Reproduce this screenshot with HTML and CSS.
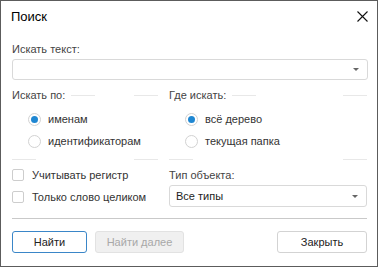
FILE: index.html
```html
<!DOCTYPE html>
<html lang="ru">
<head>
    <meta charset="UTF-8">
    <title>Поиск</title>
    <link rel="stylesheet" href="styles.css">
</head>
<body>
    <div class="dialog">
        <div class="dialog-header">
            <span class="dialog-title">Поиск</span>
            <svg class="close-icon" width="11" height="11" viewBox="0 0 11 11">
                <path d="M0.5 0.5 L10.5 10.5 M10.5 0.5 L0.5 10.5" stroke="#111" stroke-width="1.1" fill="none"/>
            </svg>
        </div>

        <div class="dialog-body">
            <div class="field-label">Искать текст:</div>
            <div class="combo combo-wide">
                <span class="combo-text"></span>
                <span class="combo-arrow"></span>
            </div>

            <div class="columns groups">
                <div class="group">
                    <div class="group-head">
                        <span class="group-title">Искать по:</span>
                        <span class="group-line"></span>
                    </div>
                    <div class="radio-list">
                        <div class="radio-row"><span class="radio checked"></span>именам</div>
                        <div class="radio-row"><span class="radio"></span>идентификаторам</div>
                    </div>
                    <div class="group-line group-bottom"></div>
                </div>
                <div class="group">
                    <div class="group-head">
                        <span class="group-title">Где искать:</span>
                        <span class="group-line"></span>
                    </div>
                    <div class="radio-list">
                        <div class="radio-row"><span class="radio checked"></span>всё дерево</div>
                        <div class="radio-row"><span class="radio"></span>текущая папка</div>
                    </div>
                    <div class="group-line group-bottom"></div>
                </div>
            </div>

            <div class="columns options">
                <div class="checks">
                    <div class="check-row"><span class="checkbox"></span>Учитывать регистр</div>
                    <div class="check-row"><span class="checkbox"></span>Только слово целиком</div>
                </div>
                <div class="type-field">
                    <div class="type-label">Тип объекта:</div>
                    <div class="combo">
                        <span class="combo-text">Все типы</span>
                        <span class="combo-arrow"></span>
                    </div>
                </div>
            </div>

            <div class="separator"></div>

            <div class="buttons">
                <button class="btn btn-primary">Найти</button>
                <button class="btn btn-disabled" disabled>Найти далее</button>
                <button class="btn btn-close">Закрыть</button>
            </div>
        </div>
    </div>
</body>
</html>
```

FILE: styles.css
```css
body {
    margin: 0;
    padding: 0;
    background-color: #fff;
    font-family: 'Liberation Sans', Arial, sans-serif;
    font-size: 11px;
    color: #333;
}

.dialog {
    width: 378px;
    height: 267px;
    box-sizing: border-box;
    border: 1px solid #5c5c5c;
    background-color: #fff;
}

.dialog-header {
    display: flex;
    align-items: center;
    justify-content: space-between;
    height: 31px;
    padding: 0 9px 0 10px;
}

.dialog-title {
    font-size: 13px;
    color: #000;
}

.close-icon {
    display: block;
}

.dialog-body {
    padding: 0 10px 0 11px;
}

.field-label {
    margin-top: 9px;
    line-height: 16px;
    color: #444;
}

.combo {
    display: flex;
    align-items: center;
    justify-content: space-between;
    box-sizing: border-box;
    height: 22px;
    padding: 0 8px 0 6px;
    border: 1px solid #d9d9d9;
    border-radius: 3px;
    background-color: #fff;
}

.combo-wide {
    margin-top: 2px;
    height: 21px;
    margin-right: -1px;
}

.combo-text {
    color: #222;
}

.combo-arrow {
    width: 0;
    height: 0;
    border-left: 3px solid transparent;
    border-right: 3px solid transparent;
    border-top: 3px solid #666;
}

.columns {
    display: grid;
    grid-template-columns: 146px 198px;
    column-gap: 11px;
}

.groups {
    margin-top: 8px;
}

.group-head {
    display: flex;
    align-items: center;
    height: 14px;
}

.group-title {
    color: #444;
    margin-right: 6px;
}

.group-line {
    flex: 1;
    height: 1px;
    background: linear-gradient(to right, #e8e8e8 0 24px, transparent 24px calc(100% - 24px), #e8e8e8 calc(100% - 24px));
}

.group-bottom {
    margin-top: 7px;
}

.radio-list {
    margin-top: 6px;
    padding-left: 16px;
}

.radio-row,
.check-row {
    display: flex;
    align-items: center;
    height: 22px;
    color: #333;
    white-space: nowrap;
}

.radio {
    position: relative;
    flex: none;
    width: 13px;
    height: 13px;
    box-sizing: border-box;
    border: 1px solid #d2d2d2;
    border-radius: 50%;
    margin-right: 7px;
    background-color: #fff;
}

.radio.checked::after {
    content: '';
    position: absolute;
    left: 2px;
    top: 2px;
    width: 7px;
    height: 7px;
    border-radius: 50%;
    background-color: #1f87d2;
}

.options {
    margin-top: 4px;
}

.checkbox {
    flex: none;
    width: 12px;
    height: 12px;
    box-sizing: border-box;
    border: 1px solid #cdcdcd;
    border-radius: 2px;
    margin-right: 8px;
}

.type-label {
    margin-top: 2px;
    line-height: 18px;
    color: #444;
}

.type-field .combo {
    margin-top: 1px;
}

.separator {
    margin-top: 10px;
    height: 1px;
    background-color: #c9c9c9;
}

.buttons {
    display: flex;
    gap: 8px;
    margin-top: 12px;
}

.btn {
    height: 22px;
    box-sizing: border-box;
    border: 1px solid #d3d3d3;
    border-radius: 3px;
    background-color: #fff;
    font-family: 'Liberation Sans', Arial, sans-serif;
    font-size: 11px;
    color: #222;
    padding: 0;
}

.btn-primary {
    width: 75px;
    border-color: #3a86c8;
}

.btn-disabled {
    width: 89px;
    background-color: #f0f0f0;
    border-color: #e2e2e2;
    color: #a8a8a8;
}

.btn-close {
    width: 90px;
    margin-left: auto;
}
```
